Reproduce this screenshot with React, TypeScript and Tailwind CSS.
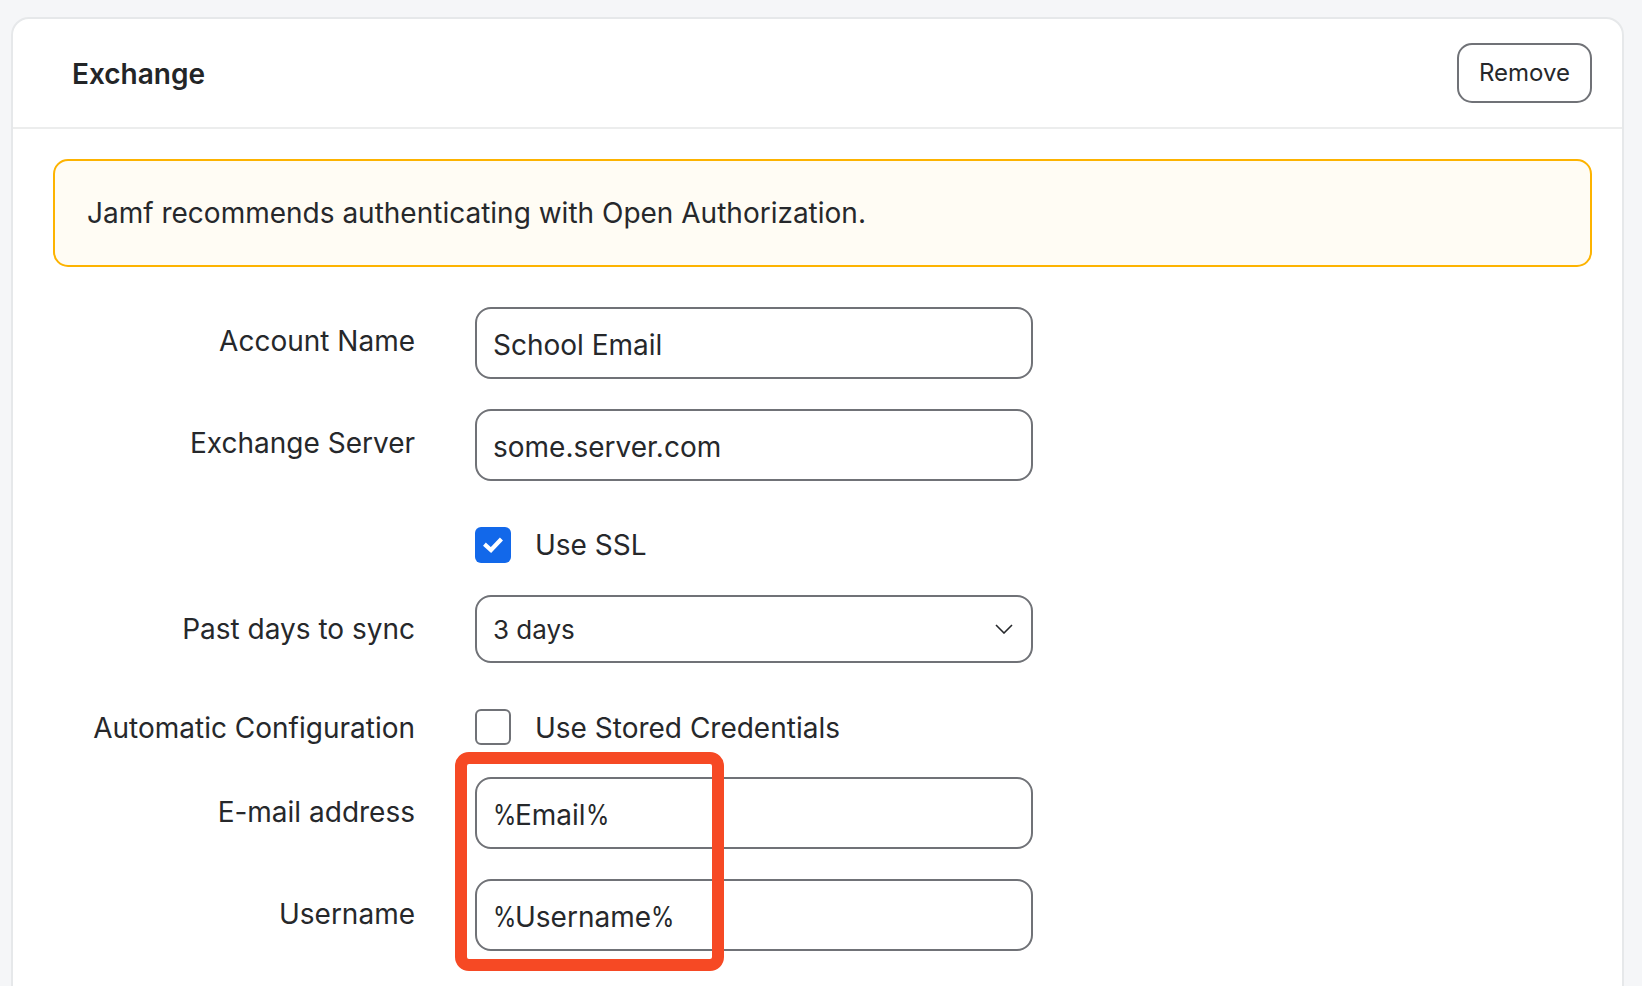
import React from "react";

function Label({ children, className }: { children: React.ReactNode; className: string }) {
  return (
    <div className={`w-[362px] shrink-0 text-right text-[28px] leading-[36px] text-[#26282b] ${className}`}>
      {children}
    </div>
  );
}

function Percent() {
  return <span className="inline-block w-[22px] origin-left scale-x-[0.85]">%</span>;
}

function TextField({
  label,
  value,
  className,
  labelClassName,
  wrapped,
}: {
  label: string;
  value: string;
  className: string;
  labelClassName: string;
  wrapped?: boolean;
}) {
  return (
    <div className={`flex items-center gap-[60px] ${className}`}>
      <Label className={labelClassName}>{label}</Label>
      <div className="flex h-[72px] w-[558px] items-center rounded-[16px] border-2 border-[#707277] bg-white px-[16px] pt-[4px] text-[28px] text-[#26282b]">
        {wrapped ? (
          <span>
            <Percent />
            {value}
            <Percent />
          </span>
        ) : (
          <span>{value}</span>
        )}
      </div>
    </div>
  );
}

export default function App() {
  return (
    <div
      className="relative h-[986px] overflow-hidden bg-[#f5f6f8] pt-[17px] pr-[18px] pl-[11px] text-[#26282b]"
      style={{ fontFamily: "Inter, sans-serif" }}
    >
      <div className="h-[1000px] rounded-t-[18px] border-2 border-[#e6e8ea] bg-white">
        <div className="flex h-[110px] items-center justify-between border-b-2 border-[#eceded] pr-[30px] pl-[59px]">
          <h2 className="pt-[2px] text-[28px] font-semibold text-[#232527]">Exchange</h2>
          <button className="flex h-[60px] w-[135px] items-center justify-center rounded-[15px] border-2 border-[#707277] bg-white text-[24px] text-[#26282b]">
            Remove
          </button>
        </div>
        <div className="pt-[30px] pr-[30px] pl-[40px]">
          <div className="flex h-[108px] items-center rounded-[15px] border-2 border-[#fdb300] bg-[#fffcf4] px-[32px] text-[28px] text-[#26282b]">
            Jamf recommends authenticating with Open Authorization.
          </div>
          <TextField label="Account Name" value="School Email" className="mt-[40px]" labelClassName="pb-[4px]" />
          <TextField label="Exchange Server" value="some.server.com" className="mt-[30px]" labelClassName="pb-[4px]" />
          <div className="mt-[46px] flex h-[36px] items-center gap-[24px] pl-[422px]">
            <div className="flex h-[36px] w-[36px] items-center justify-center rounded-[6px] bg-[#1268ea]">
              <svg viewBox="0 0 20 20" className="h-[20px] w-[20px]" fill="none" stroke="#ffffff" strokeWidth="4.2" strokeLinecap="square">
                <path d="M3 10.5 L8 15 L17 5.5" />
              </svg>
            </div>
            <span className="text-[28px]">Use SSL</span>
          </div>
          <div className="mt-[32px] flex items-center gap-[60px]">
            <Label className="">Past days to sync</Label>
            <div className="flex h-[68px] w-[558px] items-center justify-between rounded-[16px] border-2 border-[#707277] bg-white pr-[18px] pl-[16px] text-[26px]">
              <span>3 days</span>
              <svg viewBox="0 0 18 10" className="h-[10px] w-[18px]" fill="none" stroke="#26282b" strokeWidth="1.6">
                <path d="M1 1 L9 9 L17 1" />
              </svg>
            </div>
          </div>
          <div className="mt-[46px] flex h-[36px] items-center gap-[60px]">
            <Label className="pt-[2px]">Automatic Configuration</Label>
            <div className="flex items-center gap-[24px]">
              <div className="h-[36px] w-[36px] rounded-[6px] border-2 border-[#707277] bg-white" />
              <span className="pt-[2px] text-[28px] leading-[36px]">Use Stored Credentials</span>
            </div>
          </div>
          <TextField label="E-mail address" value="Email" wrapped className="mt-[32px]" labelClassName="pb-[3px]" />
          <TextField label="Username" value="Username" wrapped className="mt-[30px]" labelClassName="pb-[3px]" />
        </div>
      </div>
      <div className="absolute top-[752px] left-[455px] h-[219px] w-[269px] rounded-[14px] border-[12px] border-[#f64924]" />
    </div>
  );
}
